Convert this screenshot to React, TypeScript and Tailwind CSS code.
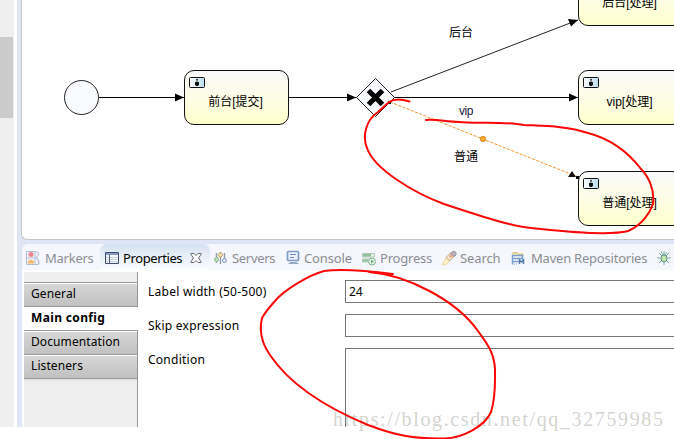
import type { ReactNode } from "react";

const cjk = "font-['Liberation_Sans','Noto_Sans_CJK_SC',sans-serif]";

function UserIcon() {
  return (
    <svg width="16" height="11" viewBox="0 0 16 11" className="absolute left-[4px] top-[6px]">
      <defs>
        <linearGradient id="badge" x1="0" x2="1">
          <stop offset="0" stopColor="#fff" />
          <stop offset="1" stopColor="#b9dcec" />
        </linearGradient>
      </defs>
      <rect x=".5" y=".5" width="15" height="10" rx="1" fill="url(#badge)" stroke="#111" />
      <circle cx="8" cy="2.8" r="1" fill="#333" />
      <path d="M6 5.200Q8 3.800 10 5.200L10 7.500 9 9H7L6 7.500Z" fill="#111" />
    </svg>
  );
}

function Task({ place, label }: { place: string; label: string }) {
  return (
    <div
      className={`absolute flex h-[55px] w-[105px] items-center justify-center rounded-[10px] border border-[#111] bg-linear-to-b from-[#fafafc] to-[#ffffcd] pr-[2px] pt-[8px] ${place}`}
    >
      <UserIcon />
      <span className="whitespace-nowrap text-[12px] leading-[14px] text-black">{label}</span>
    </div>
  );
}

function Diagram() {
  return (
    <div className={`relative h-[240px] overflow-hidden rounded-bl-[6px] border-b border-l border-[#c5c6cc] bg-white ${cjk}`}>
      <Task place="left-[162px] top-[70px]" label="前台[提交]" />
      <Task place="left-[556px] top-[-29px]" label="后台[处理]" />
      <Task place="left-[556px] top-[70px]" label="vip[处理]" />
      <Task place="left-[556px] top-[171px]" label="普通[处理]" />
      <svg width="652" height="240" viewBox="22 0 652 240" className="absolute left-0 top-0">
        <circle cx="81.5" cy="97.5" r="17" fill="#fafbfe" stroke="#222" />
        <g stroke="#000" fill="none">
          <path d="M99 97.5H184M289 97.5H357M394 97.5H578" />
          <path d="M391 92L578 20" stroke="#222" />
        </g>
        <path d="M175 93.5L184 97.5 175 101.5ZM347 93.5L356 97.5 347 101.5ZM569 93.5L578 97.5 569 101.5ZM568 19L578 20 571 26.5Z" fill="#000" />
        <path d="M356.5 97.5L375.5 78.5 394.5 97.5 375.5 116.5Z" fill="#fafbfe" stroke="#222" />
        <path d="M368.500 90.500L382.500 104.500M382.500 90.500L368.500 104.500" stroke="#000" strokeWidth="5" />
        <path d="M390 102L578 177" stroke="#f5932b" strokeDasharray="3 1.5" fill="none" />
        <path d="M568 177L572 171 576 177Z" fill="#111" />
        <path d="M388 101h3v3h-3zM576 176h3v3h-3z" fill="#000" />
        <circle cx="483" cy="139" r="2.800" fill="#f7a928" stroke="#c77c20" strokeWidth=".7" />
      </svg>
      <span className="absolute left-[427px] top-[26px] text-[12px] leading-[14px]">后台</span>
      <span className="absolute left-[437px] top-[104px] text-[12px] leading-[14px] tracking-[-0.4px] text-[#1b1b38]">vip</span>
      <span className="absolute left-[432px] top-[150px] text-[12px] leading-[14px]">普通</span>
    </div>
  );
}

function Icon({ children }: { children: ReactNode }) {
  return (
    <svg width="16" height="16" viewBox="0 0 16 16" fill="none" className="shrink-0">
      {children}
    </svg>
  );
}

const MarkersIcon = () => (
  <Icon>
    <path d="M1.500 1.500h9q3 0 3 2.500t-3 3.500q3 1 3 3.500v3.500H1.500Z" fill="#f0f0f5" stroke="#b3bdd0" />
    <path d="M10 2v12M2 8h8M11 8l3 3v3" stroke="#bac6d8" />
    <circle cx="6" cy="4.500" r="2.500" fill="#e88791" />
    <path d="M3 13.500v-2q3-3.500 6 0v2Z" fill="#f1bb6b" />
  </Icon>
);
const TableIcon = () => (
  <Icon>
    <path d="M1.500 2.500h13v11h-13Z" fill="#f4f8fd" stroke="#3d4d78" />
    <path d="M2 3h12v2H2Z" fill="#8899bd" />
    <path d="M2 7.500h12M2 9.500h12M2 11.500h12" stroke="#c3cddd" strokeWidth=".8" />
    <path d="M5.500 5v8" stroke="#4c5c82" />
  </Icon>
);
const ServersIcon = () => (
  <Icon>
    <path d="M3.500 3v10M7.500 2v12M11.500 3v10" stroke="#929ba9" strokeWidth="1.400" />
    <circle cx="3.500" cy="9.500" r="2" fill="#c6e6c5" stroke="#83b58b" />
    <circle cx="7.500" cy="5" r="2" fill="#f7e5af" stroke="#c3a569" />
    <circle cx="11.500" cy="10.500" r="2" fill="#dce8f8" stroke="#879fc0" />
  </Icon>
);
const ConsoleIcon = () => (
  <Icon>
    <rect x="2.500" y="1.500" width="11" height="9" rx="1" fill="#eef4fd" stroke="#7f9bc5" strokeWidth="1.700" />
    <path d="M5 4.500h6M5 7.500h4" stroke="#7188b3" />
    <path d="M5 12.500h7M3.500 13.500h10" stroke="#98a9c8" strokeWidth="1.200" />
  </Icon>
);
const ProgressIcon = () => (
  <Icon>
    <path d="M1.500 3.500h12v3.500h-12ZM1.500 9h7v3h-7Z" fill="#e8f2e9" stroke="#b7c6bb" />
    <path d="M2 4h8v2.500H2ZM2 9.500h5v2H2Z" fill="#8fc39c" />
    <circle cx="11" cy="11.500" r="3.500" fill="#e3f3e7" stroke="#7db38f" />
    <path d="M10 9.500v4l3-2Z" fill="#6caf80" />
  </Icon>
);
const SearchIcon = () => (
  <Icon>
    <path d="M1 14.500L5.500 7.500l3.500 3.500L4.500 14.500Z" fill="#fff2c8" stroke="#ead8a5" />
    <path d="M5 7.500l5.500-5.500 3.500 3.500-5.500 5.500Z" fill="#f4e6cc" stroke="#b9a68c" />
    <path d="M9.500 3.500l2.500-2q2-.500 3 1v2.500l-2 1.500Z" fill="#b5b2bf" stroke="#9b959f" />
    <circle cx="10" cy="6" r="1.500" fill="#ef9d75" />
  </Icon>
);
const MavenIcon = () => (
  <Icon>
    <path d="M3 5V2.500h4V4h6v2" fill="#f8edb5" stroke="#d3bd71" />
    <path d="M2 5.500h11M2 8.500h11M2 11.500h7M2.500 5v9M12.500 5v5" stroke="#7a9fcd" strokeWidth="1.500" />
    <path d="M2 14h5" stroke="#7a9fcd" strokeDasharray="1 1" />
    <path d="M9.500 14v-4l2 2 2-2v4" stroke="#577bac" strokeWidth="1.500" />
  </Icon>
);
const BugIcon = () => (
  <Icon>
    <path d="M8 1v14M1 8h14M3 3l10 10M13 3L3 13M5 1l2 4M11 2L9 5" stroke="#7fac9d" />
    <ellipse cx="8" cy="8.500" rx="3" ry="3.500" fill="#c2e6ac" stroke="#5a9485" />
  </Icon>
);

const grey = "text-[#8c8e94]";

function Tab({ icon, label, className }: { icon: ReactNode; label: string; className: string }) {
  return (
    <div className={`flex shrink-0 items-center whitespace-nowrap pt-[2px] ${className}`}>
      {icon}
      <span className={grey}>{label}</span>
    </div>
  );
}

function TabBar() {
  return (
    <div className="flex h-[26px] overflow-hidden rounded-tl-[6px] bg-[#f5f7fc] text-[13px] leading-[18px]">
      <Tab icon={<MarkersIcon />} label="Markers" className="w-[78px] gap-[4px] pl-[3px] tracking-[-0.25px]" />
      <div className="flex w-[110px] shrink-0 items-center rounded-t-[7px] bg-linear-to-b from-[#d5e2ef] to-[#fbfdff] pl-[4px] pt-[2px] tracking-[-0.4px] text-black">
        <TableIcon />
        <span className="ml-[3px] w-[67px]">Properties</span>
        <svg width="12" height="12" viewBox="0 0 12 12" fill="#fff" stroke="#666">
          <path d="M1 1.500h3l2 2 2-2h3v1L8.500 6l2.500 3.500v1H8l-2-2-2 2H1v-1L3.500 6 1 2.500Z" />
        </svg>
      </div>
      <Tab icon={<ServersIcon />} label="Servers" className="w-[73px] gap-[3px] pl-[3px] tracking-[-0.3px]" />
      <Tab icon={<ConsoleIcon />} label="Console" className="w-[78px] gap-[3px] pl-[2px] tracking-[-0.15px]" />
      <Tab icon={<ProgressIcon />} label="Progress" className="w-[80px] gap-[3px] tracking-[-0.2px]" />
      <Tab icon={<SearchIcon />} label="Search" className="w-[69px] gap-[3px] tracking-[-0.1px]" />
      <Tab icon={<MavenIcon />} label="Maven Repositories" className="w-[146px] gap-[5px] tracking-[-0.22px]" />
      <Tab icon={<BugIcon />} label="" className="w-[20px]" />
    </div>
  );
}

function SideItem({ label }: { label: string }) {
  return (
    <div className="flex h-[24px] items-center border-t border-[#999] pt-px">
      <div className="flex h-[22px] w-full items-center bg-linear-to-b from-[#d7d7d7] to-[#c0c0c0] pb-[2px] pl-[7px] tracking-[0.1px]">{label}</div>
    </div>
  );
}

function Properties() {
  return (
    <div className="flex h-[157px] bg-white text-[12px] leading-[16px] text-black">
      <div className="ml-[2px] mt-[2px] flex w-[114px] shrink-0 flex-col">
        <div className="h-[10px] border-r border-[#999] bg-[#efefef]" />
        <div className="border-r border-[#999]"><SideItem label="General" /></div>
        <div className="flex h-[24px] items-center border-t border-[#999] pb-[2px] pl-[7px] font-bold tracking-[0.35px]">Main config</div>
        <div className="border-r border-[#999]">
          <SideItem label="Documentation" />
          <SideItem label="Listeners" />
        </div>
        <div className="flex-1 border-r border-t border-[#999] bg-linear-to-b from-[#dedede] from-0% to-[#efefef] to-[3px]" />
      </div>
      <div className="flex flex-1 pl-[10px]">
        <div className="flex w-[197px] shrink-0 flex-col gap-[18px] pt-[14px] tracking-[0.25px]">
          <span>Label width (50-500)</span>
          <span>Skip expression</span>
          <span>Condition</span>
        </div>
        <div className="flex flex-1 flex-col gap-[11px] pt-[10px]">
          <div className="flex h-[23px] items-center border-y border-l border-[#777] pl-[3px]">24</div>
          <div className="h-[23px] border-y border-l border-[#777]" />
          <div className="flex-1 border-l border-t border-[#777]" />
        </div>
      </div>
    </div>
  );
}

function Annotations() {
  return (
    <svg width="674" height="439" viewBox="0 0 674 439" fill="none" stroke="#fb0707" strokeWidth="2" strokeLinecap="round" strokeLinejoin="round" className="pointer-events-none absolute left-0 top-0">
      <path d="M409.500 101.500C402 99 394 98.500 389 102L378 112C366 120 362 136 367 148C374 169 414 193 444 204C487 218 512 227 541 229C578 233 612 235 628 231C642 225 650 213 653 204C655 189 648 176 641 169C628 152 611 139 588 133C567 126 545 126 524 125C503 121 475 124 459 122C446 122 438 119 426 120" />
      <path d="M393 274C369 271 340 269 324 271C309 275 284 290 275 301Q266 311 262 318C259 331 262 344 270 355C292 388 332 410 368 425C397 436 415 439 444 438.500C463 438 485 426 491 412C496 397 495 380 495 369C494 350 484 340 478 331C456 300 407 275 369 272L393 274" />
    </svg>
  );
}

export default function App() {
  return (
    <div className="relative h-[439px] w-[674px] overflow-hidden bg-white font-['Noto_Sans','Open_Sans',sans-serif]">
      <div className="flex h-[427px]">
        <div className="w-[14px] shrink-0 bg-[#efefef] pt-[37px]">
          <div className="h-[81px] w-[13px] bg-[#cbcbcb]" />
        </div>
        <div className="w-[3px] shrink-0" />
        <div className="min-w-0 flex-1 bg-[#dfe5f5] pl-[4px]">
          <Diagram />
          <div className="mt-[4px] pl-px">
            <TabBar />
            <Properties />
          </div>
        </div>
      </div>
      <div className="absolute left-[333px] top-[407px] whitespace-nowrap font-['Liberation_Serif',serif] text-[20px] leading-[24px] tracking-[1.630px] text-[#bbbdb5]/65">https://blog.csdn.net/qq_32759985</div>
      <Annotations />
    </div>
  );
}
